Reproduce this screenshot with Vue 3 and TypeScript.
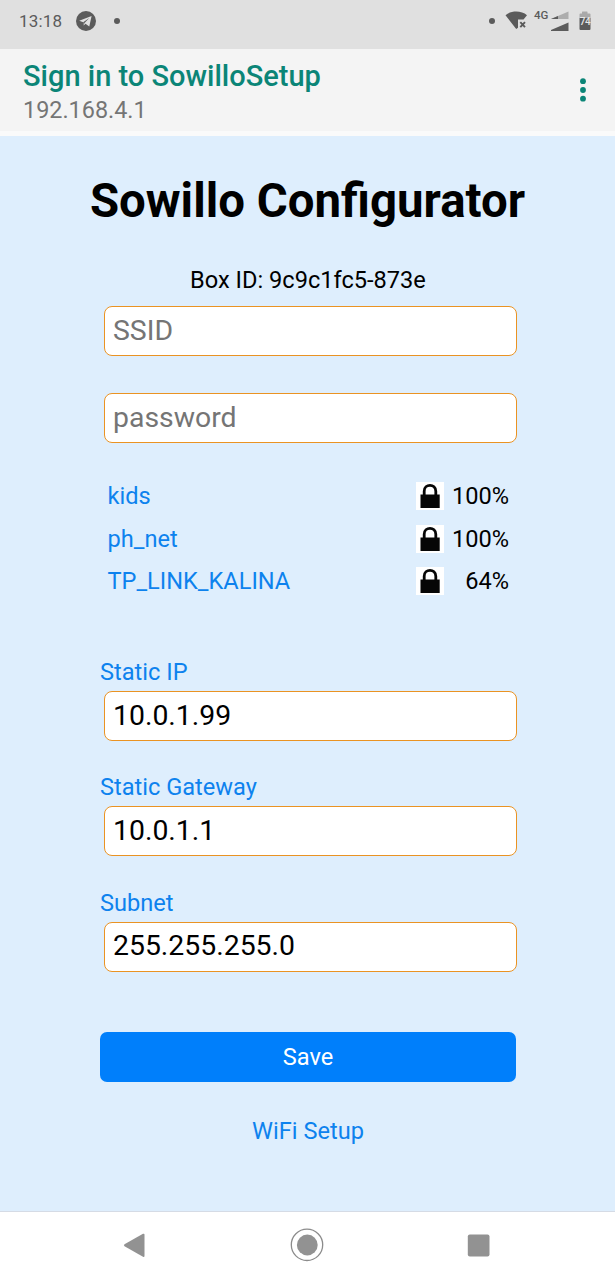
<script setup lang="ts">
import { ref } from 'vue'

interface Network { name: string; quality: number }
interface Field { label: string; value: string }

const ssid = ref('')
const password = ref('')
const networks: Network[] = [
  { name: 'kids', quality: 100 },
  { name: 'ph_net', quality: 100 },
  { name: 'TP_LINK_KALINA', quality: 64 },
]
const fields = ref<Field[]>([
  { label: 'Static IP', value: '10.0.1.99' },
  { label: 'Static Gateway', value: '10.0.1.1' },
  { label: 'Subnet', value: '255.255.255.0' },
])
</script>

<template>
  <div class="screen">
    <div class="status">
      <span class="clock">13:18</span>
      <svg class="telegram" width="20" height="20" viewBox="0 0 20 20">
        <circle cx="10" cy="10" r="10" fill="#5b5b5b" />
        <path d="M3.2 9.7 15.6 5 13.3 15.6 9.5 12.7 7.6 14.5 7.2 11.2Z" fill="#e0e0e0" />
        <path d="M7.2 11.2 13.3 7 8.5 12.1 7.6 14.5Z" fill="#5b5b5b" />
      </svg>
      <i class="dot"></i>
      <i class="dot right"></i>
      <svg class="wifi" width="23" height="19" viewBox="0 0 23 19">
        <path d="M.5 4.2C6-.8 16.500-.8 22 4.200L18.500 8.500H13V16.800L11.200 18Z" fill="#5b5b5b" />
        <path d="M15.300 11.200 20 16.200M20 11.200 15.300 16.200" stroke="#5b5b5b" stroke-width="1.900" />
      </svg>
      <span class="lte">4G</span>
      <svg class="signal" width="18" height="22" viewBox="0 0 18 22">
        <path d="M0 8 17.500 .5V8Z" fill="#adadad" />
        <path d="M0 8 7 5V8Z" fill="#5b5b5b" />
        <path d="M0 19 17.500 11.500V20H0Z" fill="#5b5b5b" />
      </svg>
      <div class="battery">
        <svg width="12" height="20" viewBox="0 0 12 20">
          <path d="M3 2.500V1Q3 .5 3.500 .5H8Q8.500 .5 8.500 1V2.500H10.500Q11.500 2.500 11.500 3.500V7H.5V3.500Q.5 2.500 1.500 2.500Z" fill="#a9a9a9" />
          <path d="M.5 7H11.500V18Q11.500 19 10.500 19H1.500Q.5 19 .5 18Z" fill="#5b5b5b" />
        </svg>
        <span>74</span>
      </div>
    </div>

    <header class="bar">
      <div>
        <div class="title">Sign in to SowilloSetup</div>
        <div class="host">192.168.4.1</div>
      </div>
      <svg width="6" height="24" viewBox="0 0 6 24" fill="#0b8577">
        <circle cx="3" cy="3.200" r="2.900" /><circle cx="3" cy="12" r="2.900" /><circle cx="3" cy="20.700" r="2.900" />
      </svg>
    </header>

    <main class="page">
      <h1>Sowillo Configurator</h1>
      <div class="box-id">Box ID: 9c9c1fc5-873e</div>
      <div class="form">
        <input v-model="ssid" class="ssid" placeholder="SSID" />
        <input v-model="password" class="password" placeholder="password" />
        <div class="networks">
          <div v-for="n in networks" :key="n.name" class="network">
            <a>{{ n.name }}</a>
            <svg width="28" height="28" viewBox="0 0 28 28">
              <path d="M0 0H28V28H0Z" fill="#fff" />
              <path d="M8.200 13V9.200C8.200 1.400 19.800 1.400 19.800 9.200V13" fill="none" stroke="#060606" stroke-width="2.800" />
              <path d="M4.500 12.500H23.700V26H4.500Z" fill="#060606" />
            </svg>
            <span>{{ n.quality }}%</span>
          </div>
        </div>
        <div v-for="f in fields" :key="f.label" class="field">
          <label>{{ f.label }}</label>
          <input v-model="f.value" />
        </div>
        <button>Save</button>
        <a class="setup">WiFi Setup</a>
      </div>
    </main>

    <nav class="nav">
      <svg width="615" height="68" viewBox="0 0 615 68" fill="#929292">
        <path d="M124.500 32.200 143 21.800Q144.500 21.200 144.500 22.800V43.800Q144.500 45.500 143 44.800L124.500 34.200Q123.300 33.200 124.500 32.200Z" />
        <circle cx="307" cy="32.800" r="15.700" fill="none" stroke="#8c8c8c" stroke-width="1.300" />
        <circle cx="307.300" cy="33" r="10.400" />
        <rect x="467.800" y="22.500" width="21.700" height="22" rx="2" />
      </svg>
    </nav>
  </div>
</template>

<style>
body { margin: 0; }
</style>

<style scoped>
* { box-sizing: border-box; }
.screen {
  width: 615px;
  height: 1280px;
  display: flex;
  flex-direction: column;
  overflow: hidden;
  background: #deeefd;
  font-family: Roboto, "Liberation Sans", sans-serif;
  font-size: 23.6px;
  color: #000;
}
.status {
  height: 49px;
  flex: none;
  display: flex;
  align-items: flex-start;
  padding: 11px 24px 0 19px;
  background: #e0e0e0;
  color: #5b5b5b;
}
.clock { width: 56.500px; font-size: 17px; line-height: 21px; letter-spacing: .2px; }
.telegram { margin-right: 18.500px; }
.dot { width: 6px; height: 6px; margin-top: 7px; border-radius: 50%; background: #5b5b5b; }
.dot.right { margin-left: auto; }
.wifi { margin: 0 6px 0 10px; }
.lte { width: 17px; font-size: 11.500px; line-height: 11px; margin-top: -1px; font-weight: 500; }
.signal { margin-right: 10px; }
.battery { position: relative; width: 12px; height: 20px; }
.battery svg { display: block; }
.battery span {
  position: absolute;
  left: 0;
  top: 6px;
  width: 12px;
  text-align: center;
  font-size: 10px;
  font-weight: 500;
  line-height: 10px;
  letter-spacing: -.5px;
  color: #e6e6e6;
}
.bar {
  height: 87px;
  flex: none;
  display: flex;
  justify-content: space-between;
  align-items: flex-start;
  padding: 10px 29px 0 23px;
  background: #f4f4f4;
  border-bottom: 5px solid #fafafa;
}
.bar svg { margin-top: 19px; }
.title { font-size: 29px; line-height: 34px; font-weight: 500; color: #0b8577; }
.host { font-size: 23.400px; line-height: 35px; color: #757575; }
.page { flex: 1; padding-top: 32px; }
h1 { margin: 0; font-size: 47.400px; line-height: 66px; font-weight: 700; text-align: center; }
.box-id { margin-top: 32px; line-height: 28px; text-align: center; padding-left: 1px; }
.form { width: 416px; margin: 12px 0 0 100px; display: flex; flex-direction: column; }
input {
  display: block;
  width: 413px;
  height: 50px;
  margin: 0 0 0 4px;
  padding: 0 8px 2px;
  border: 1px solid #ea9323;
  border-radius: 8px;
  background: #fff;
  outline: none;
  font: 28.400px Roboto, "Liberation Sans", sans-serif;
  color: #000;
}
input::placeholder { color: #757575; opacity: 1; }
.password { margin-top: 37px; }
.networks { margin: 32px 0 55.500px; padding: 0 7px 0 7.500px; }
.network { display: flex; align-items: center; height: 42.500px; }
.network a { flex: 1; }
.network svg { margin-right: .5px; }
.network span { width: 65px; text-align: right; }
a, label { color: #0d82ee; }
.field { height: 115.300px; }
label { display: block; line-height: 28px; margin-bottom: 5px; }
button {
  height: 50px;
  margin-top: 28px;
  padding: 0;
  border: 0;
  border-radius: 7px;
  background: #007ffb;
  color: #fff;
  font: 23.600px Roboto, "Liberation Sans", sans-serif;
}
.setup { margin-top: 35px; line-height: 28px; text-align: center; }
.nav { height: 69px; flex: none; border-top: 1px solid #d5dbe5; background: #fff; }
.nav svg { display: block; }
</style>
